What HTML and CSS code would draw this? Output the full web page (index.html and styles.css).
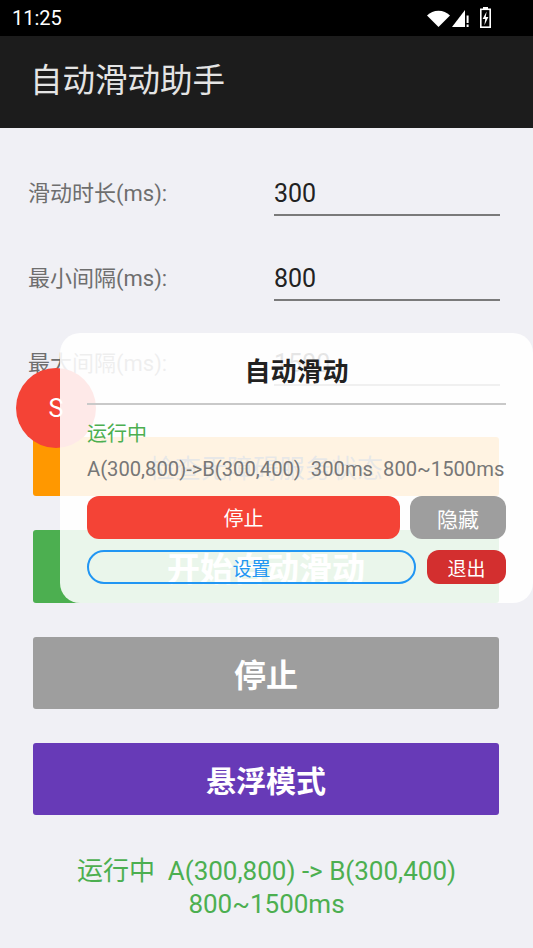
FILE: index.html
```html
<!DOCTYPE html>
<html lang="zh-CN">
<head>
<meta charset="utf-8">
<title>自动滑动助手</title>
<link rel="stylesheet" href="styles.css">
</head>
<body>
<div class="screen">
  <div class="statusbar">
    <span class="time">11:25</span>
    <svg class="sys-icons" width="64" height="21" viewBox="0 0 64 21">
      <path d="M0 8.5 A16.3 16.3 0 0 1 23 8.5 L11.5 20 Z" fill="#fff"/>
      <polygon points="25,20 38,20 38,3" fill="#fff"/>
      <rect x="39.6" y="8.5" width="2" height="7.5" fill="#fff"/>
      <rect x="39.6" y="17.5" width="2" height="2.5" fill="#fff"/>
      <rect x="56" y="0" width="5" height="2.2" fill="#fff"/>
      <rect x="53.8" y="2.3" width="9.4" height="17.9" fill="none" stroke="#fff" stroke-width="1.6"/>
      <polygon points="59.6,4.5 55.6,12 58.2,12 57.4,18.2 61.4,10 58.8,10" fill="#fff"/>
    </svg>
  </div>
  <div class="appbar"><h1 class="app-title">自动滑动助手</h1></div>

  <main class="content">
    <div class="form">
      <div class="row"><span class="label">滑动时长(ms):</span><span class="input">300</span></div>
      <div class="row"><span class="label">最小间隔(ms):</span><span class="input">800</span></div>
      <div class="row"><span class="label">最大间隔(ms):</span><span class="input">1500</span></div>
    </div>
    <div class="actions">
      <div class="btn btn-orange">检查无障碍服务状态</div>
      <div class="btn btn-green">开始自动滑动</div>
      <div class="btn btn-gray">停止</div>
      <div class="btn btn-purple">悬浮模式</div>
    </div>
    <p class="status">运行中&nbsp;&nbsp;A(300,800) -&gt; B(300,400)<br>800~1500ms</p>
  </main>

  <div class="bubble">S</div>

  <div class="float-panel">
    <div class="fp-title">自动滑动</div>
    <div class="fp-divider"></div>
    <div class="fp-state">运行中</div>
    <div class="fp-info">A(300,800)-&gt;B(300,400)&nbsp;&nbsp;300ms&nbsp;&nbsp;800~1500ms</div>
    <div class="fp-row fp-row1">
      <div class="fp-btn fp-stop">停止</div>
      <div class="fp-btn fp-hide">隐藏</div>
    </div>
    <div class="fp-row fp-row2">
      <div class="fp-btn fp-settings">设置</div>
      <div class="fp-btn fp-exit">退出</div>
    </div>
  </div>
</div>
</body>
</html>
```

FILE: styles.css
```css
* { box-sizing: border-box; }

html, body {
  margin: 0;
  padding: 0;
}

body {
  background: #f0f0f5;
  font-family: Roboto, "Noto Sans CJK SC", sans-serif;
}

.screen {
  position: relative;
  width: 533px;
  height: 948px;
  overflow: hidden;
  background: #f0f0f5;
}

/* status bar */
.statusbar {
  height: 36px;
  background: #000;
  display: flex;
  align-items: center;
  justify-content: space-between;
  padding: 0 42px 0 12px;
}

.time {
  color: #fff;
  font-size: 20px;
  line-height: 36px;
}

.sys-icons { display: block; margin-top: -2px; }

/* app bar */
.appbar {
  height: 92px;
  background: #1c1c1c;
  display: flex;
  align-items: center;
  padding-left: 30px;
}

.app-title {
  margin: 0;
  color: #e4e4e4;
  font-size: 32.5px;
  font-weight: 400;
  line-height: 40px;
  margin-top: -2px;
}

/* form */
.form {
  padding: 40px 33px 0 28px;
}

.row {
  display: flex;
  height: 48px;
  padding-top: 6px;
  margin-bottom: 37px;
}

.row:last-child { margin-bottom: 0; }

.label {
  width: 246px;
  font-size: 22px;
  line-height: 40px;
  color: #6e6e6e;
}

.input {
  width: 226px;
  height: 42px;
  font-size: 25px;
  line-height: 40px;
  color: #222;
  border-bottom: 2px solid #7a7a7a;
}

/* main buttons */
.actions {
  margin-top: 51px;
  padding: 0 34px 0 33px;
  display: flex;
  flex-direction: column;
  gap: 34px;
}

.btn {
  display: flex;
  align-items: center;
  justify-content: center;
  color: #fff;
  font-weight: 700;
  border-radius: 3px;
}

.btn-orange { height: 59px; background: #ff9800; font-size: 26px; font-weight: 400; color: #333; }
.btn-green  { height: 73px; background: #4caf50; font-size: 33px; }
.btn-gray   { height: 72px; background: #9e9e9e; font-size: 32px; }
.btn-purple { height: 72px; background: #673ab7; font-size: 30px; }

.status {
  margin: 40px 0 0;
  text-align: center;
  color: #4caf50;
  font-size: 26px;
  line-height: 33px;
}

/* floating bubble */
.bubble {
  position: absolute;
  left: 16px;
  top: 368px;
  width: 80px;
  height: 80px;
  border-radius: 50%;
  background: #f44336;
  color: #fff;
  font-size: 25px;
  display: flex;
  align-items: center;
  justify-content: center;
}

/* floating panel */
.float-panel {
  position: absolute;
  left: 60px;
  top: 333px;
  width: 473px;
  height: 270px;
  border-radius: 20px;
  background: rgba(255, 255, 255, 0.885);
  padding: 0 27px;
}

.fp-title {
  padding-top: 22px;
  height: 70px;
  text-align: center;
  font-size: 26px;
  font-weight: 700;
  line-height: 34px;
  color: #222;
}

.fp-divider {
  height: 2px;
  background: #c9c9c9;
}

.fp-state {
  margin-top: 16px;
  font-size: 20px;
  line-height: 26px;
  color: #4caf50;
}

.fp-info {
  margin-top: 9px;
  font-size: 20.2px;
  line-height: 26px;
  color: #777;
  white-space: nowrap;
}

.fp-row {
  display: flex;
}

.fp-row1 { margin-top: 14px; gap: 10px; height: 43px; }
.fp-row2 { margin-top: 11px; gap: 11px; height: 34px; }

.fp-btn {
  display: flex;
  align-items: center;
  justify-content: center;
  color: #fff;
}

.fp-stop {
  flex: 1;
  background: #f44336;
  border-radius: 12px;
  font-size: 20px;
}

.fp-hide {
  width: 96px;
  background: #9e9e9e;
  border-radius: 12px;
  font-size: 21px;
}

.fp-settings {
  flex: 1;
  border: 2px solid #2196f3;
  border-radius: 17px;
  color: #2196f3;
  font-size: 19px;
}

.fp-exit {
  width: 79px;
  background: #d32f2f;
  border-radius: 12px;
  font-size: 19px;
}
```
